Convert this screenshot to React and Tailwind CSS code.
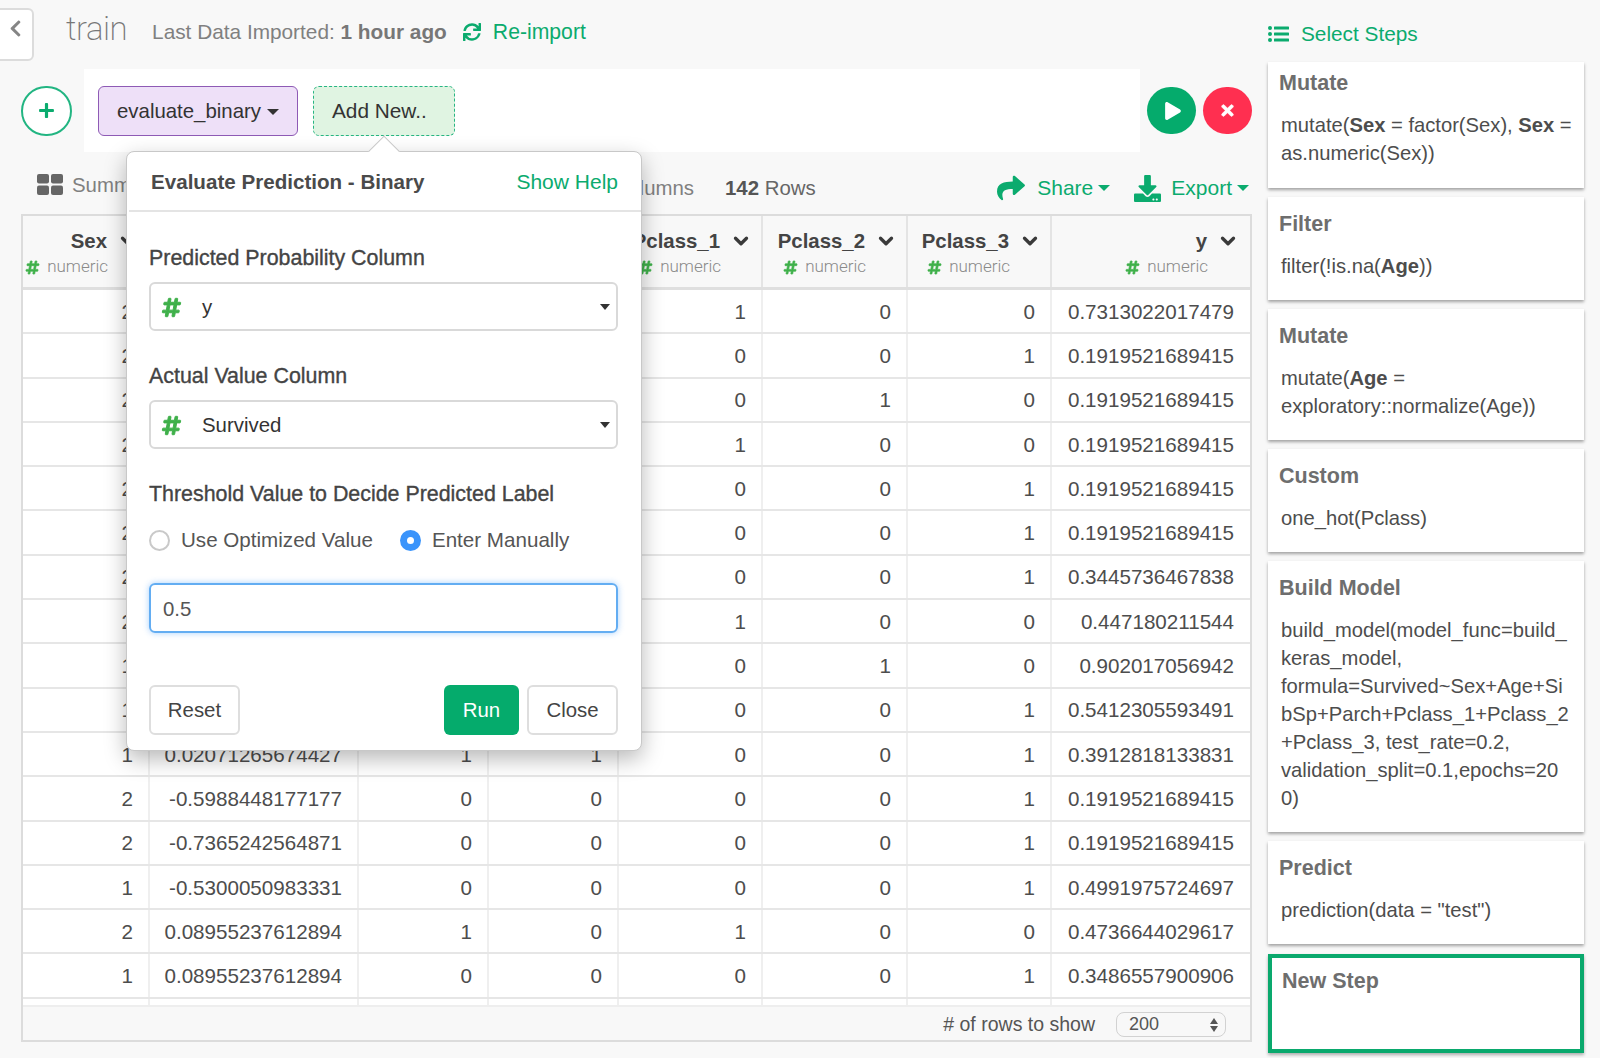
import { ChevronDown } from 'lucide-react'
import {
  FaChevronLeft,
  FaDownload,
  FaHashtag,
  FaPlay,
  FaPlus,
  FaShare,
  FaSync,
  FaTimes,
} from 'react-icons/fa'

// the popover covers Age, SibSp and Parch, so those headers stay without a label
const columns = [
  { name: 'Sex', width: 'w-[127px]' },
  { name: '', width: 'w-[209px]' },
  { name: '', width: 'w-[130px]' },
  { name: '', width: 'w-[130px]' },
  { name: 'Pclass_1', width: 'w-[144px]' },
  { name: 'Pclass_2', width: 'w-[145px]' },
  { name: 'Pclass_3', width: 'w-[144px]' },
  { name: 'y', width: 'flex-1' },
]

// covered cells stay empty too
const rows = [
  ['2', '', '', '', '1', '0', '0', '0.7313022017479'],
  ['2', '', '', '', '0', '0', '1', '0.1919521689415'],
  ['2', '', '', '', '0', '1', '0', '0.1919521689415'],
  ['2', '', '', '', '1', '0', '0', '0.1919521689415'],
  ['2', '', '', '', '0', '0', '1', '0.1919521689415'],
  ['2', '', '', '', '0', '0', '1', '0.1919521689415'],
  ['2', '', '', '', '0', '0', '1', '0.3445736467838'],
  ['2', '', '', '', '1', '0', '0', '0.447180211544'],
  ['1', '', '', '', '0', '1', '0', '0.902017056942'],
  ['1', '', '', '', '0', '0', '1', '0.5412305593491'],
  ['1', '0.02071265674427', '1', '1', '0', '0', '1', '0.3912818133831'],
  ['2', '-0.5988448177177', '0', '0', '0', '0', '1', '0.1919521689415'],
  ['2', '-0.7365242564871', '0', '0', '0', '0', '1', '0.1919521689415'],
  ['1', '-0.5300050983331', '0', '0', '0', '0', '1', '0.4991975724697'],
  ['2', '0.08955237612894', '1', '0', '1', '0', '0', '0.4736644029617'],
  ['1', '0.08955237612894', '0', '0', '0', '0', '1', '0.3486557900906'],
]

function Caret({ className }) {
  return <span className={`inline-block w-0 h-0 border-x-[6px] border-t-[6px] border-x-transparent ${className}`} />
}

function Hash({ size }) {
  return <FaHashtag size={size} stroke="currentColor" strokeWidth={24} className="text-[#3fb04a]" />
}

function GridIcon() {
  return (
    <svg width="26" height="21" viewBox="0 0 26 21" className="text-[#666]" fill="currentColor">
      <rect x="0" y="0" width="12" height="9.5" rx="2" />
      <rect x="14" y="0" width="12" height="9.5" rx="2" />
      <rect x="0" y="11.5" width="12" height="9.5" rx="2" />
      <rect x="14" y="11.5" width="12" height="9.5" rx="2" />
    </svg>
  )
}

function ListIcon() {
  return (
    <svg width="21" height="16" viewBox="0 0 21 16" fill="currentColor">
      <circle cx="2" cy="2" r="2" />
      <circle cx="2" cy="8" r="2" />
      <circle cx="2" cy="14" r="2" />
      <rect x="6" y="0.5" width="15" height="3" rx="0.6" />
      <rect x="6" y="6.5" width="15" height="3" rx="0.6" />
      <rect x="6" y="12.5" width="15" height="3" rx="0.6" />
    </svg>
  )
}

function ColumnHeader({ column }) {
  return (
    <div className={`${column.width} h-full flex flex-col items-end pr-[12px] last:pr-[14px] pt-[11px] border-r-2 border-[#e4e4e4] last:border-r-0 min-w-0`}>
      {column.name && (
        <>
          <div className="flex items-center h-[28px] gap-[13px] font-bold text-[#444]">
            <span>{column.name}</span>
            <ChevronDown size={22} strokeWidth={3.6} className="text-[#3a3a3a] -mx-[3px]" />
          </div>
          <div className="flex items-center h-[24px] pr-[28px] text-[17px] text-[#8a8a8a] gap-[7px] font-['Roboto',sans-serif] font-light">
            <Hash size={15} />
            <span>numeric</span>
          </div>
        </>
      )}
    </div>
  )
}

function DataRow({ row }) {
  return (
    <div className="flex h-[44.3px] border-b-2 border-[#e6e6e6] shrink-0">
      {row.map((value, i) => (
        <div
          key={i}
          className={`${columns[i].width} flex items-center justify-end pt-[2px] pr-[15px] last:pr-[16px] border-r-2 border-[#efefef] last:border-r-0 text-[#4d4d4d] text-[20.6px]`}
        >
          {value}
        </div>
      ))}
    </div>
  )
}

function StepCard({ title, first, children }) {
  return (
    <div className={`bg-white shadow-[0_2px_3px_rgba(0,0,0,0.35)] ${first ? 'pt-[7px] pb-[20.5px]' : 'pt-[13px] pb-[20px]'}`}>
      <div className="h-[28px] leading-[28px] pl-[11px] font-bold text-[21.5px] text-[#6e6e6e]">{title}</div>
      {children && <div className="mt-[14px] pl-[13px] leading-[28px] text-[20.2px] text-[#4d4d4d] whitespace-nowrap">{children}</div>}
    </div>
  )
}

function SelectBox({ value }) {
  return (
    <div className="relative flex items-center h-[49px] pt-[1px] border-2 border-[#d9d9d9] rounded-[6px] bg-white pl-[10px] text-[#333]">
      <Hash size={21} />
      <span className="ml-[20px]">{value}</span>
      <Caret className="absolute right-[6px] top-[20px] border-t-[#333] !border-x-[5px]" />
    </div>
  )
}

function Popover() {
  const labelStyle = "h-[28px] leading-[28px] text-[21.4px] text-[#444] [-webkit-text-stroke:0.35px_#444] whitespace-nowrap"
  return (
    <div className="absolute left-[126px] top-[151px] w-[516px] h-[600px] bg-white border border-[#c8c8c8] rounded-[8px] shadow-[0_8px_22px_rgba(0,0,0,0.28)]">
      <div className="absolute left-[246px] -top-[12px] w-[22px] h-[22px] rotate-45 bg-white border-l border-t border-[#c8c8c8]" />
      <div className="relative flex items-center justify-between h-[60px] pt-[2px] ml-[2px] pl-[22px] pr-[23px] border-b-2 border-[#e4e4e4]">
        <span className="font-bold text-[20.6px] text-[#4a4a4a]">Evaluate Prediction - Binary</span>
        <span className="text-[21px] text-[#0bab6e]">Show Help</span>
      </div>
      <div className="pl-[22px] pr-[23px]">
        <div className={`mt-[32px] mb-[10px] ${labelStyle}`}>Predicted Probability Column</div>
        <SelectBox value="y" />
        <div className={`mt-[31px] mb-[10px] ${labelStyle}`}>Actual Value Column</div>
        <SelectBox value="Survived" />
        <div className={`mt-[31px] ${labelStyle}`}>Threshold Value to Decide Predicted Label</div>
        <div className="mt-[18px] flex items-center h-[28px] text-[20.6px] text-[#555]">
          <span className="w-[21px] h-[21px] rounded-full border-2 border-[#c9c9c9] bg-white" />
          <span className="ml-[11px]">Use Optimized Value</span>
          <span className="ml-[27px] w-[21px] h-[21px] rounded-full bg-[#3a94fb] flex items-center justify-center">
            <span className="w-[7px] h-[7px] rounded-full bg-white" />
          </span>
          <span className="ml-[11px]">Enter Manually</span>
        </div>
        <div className="mt-[29px] flex items-center h-[50px] pt-[2px] border-2 border-[#63adf2] rounded-[6px] pl-[12px] text-[#555] shadow-[0_0_6px_rgba(60,150,250,0.45)]">
          0.5
        </div>
        <div className="mt-[52px] flex h-[50px] gap-[8px]">
          <button className="w-[91px] border-2 border-[#dedede] rounded-[6px] text-[#444] bg-white">Reset</button>
          <button className="ml-auto w-[75px] rounded-[6px] bg-[#05ab6c] text-white">Run</button>
          <button className="w-[91px] border-2 border-[#dedede] rounded-[6px] text-[#444] bg-white">Close</button>
        </div>
      </div>
    </div>
  )
}

export default function App() {
  return (
    <div className="relative flex w-[1600px] h-[1058px] overflow-hidden bg-[#f8f8f8] font-['Liberation_Sans',Arial,sans-serif] text-[20.4px]">
      <div className="w-[1268px] shrink-0 flex flex-col">
        {/* top line */}
        <div className="flex items-start h-[69px] shrink-0 text-[20.8px]">
          <div className="mt-[8px] -ml-[6px] w-[40px] h-[53px] bg-white border-2 border-[#dcdcdc] rounded-[6px] flex items-center justify-center pl-[2px] pb-[12px]">
            <FaChevronLeft size={19} className="text-[#858585]" />
          </div>
          <span className="ml-[32px] mt-[7px] text-[33px] leading-[44px] tracking-[-0.5px] font-['Roboto',sans-serif] font-extralight text-[#777]">train</span>
          <span className="ml-[25px] mt-[18px] leading-[28px] text-[#808080]">
            Last Data Imported: <b className="text-[#777]">1 hour ago</b>
          </span>
          <FaSync size={18} className="ml-[16px] mt-[23px] text-[#0bab6e]" />
          <span className="ml-[12px] mt-[18px] leading-[28px] text-[21.2px] text-[#0bab6e]">Re-import</span>
        </div>

        {/* step bar */}
        <div className="flex items-center h-[83px] shrink-0">
          <div className="ml-[21px] w-[51px] h-[50px] rounded-full border-2 border-[#22b582] bg-white flex items-center justify-center">
            <FaPlus size={17} className="text-[#0bab6e]" />
          </div>
          <div className="ml-[12px] w-[1056px] h-full bg-white flex items-center pl-[14px] gap-[15px]">
            <div className="w-[200px] h-[50px] rounded-[6px] border-[1.5px] border-[#8e5ab5] bg-[#eee0f8] flex items-center pt-[2px] pl-[18px] text-[#333]">
              evaluate_binary
              <Caret className="ml-[6px] border-t-[#333]" />
            </div>
            <div className="w-[142px] h-[50px] rounded-[6px] border border-dashed border-[#27b582] bg-[#e0f4e2] flex items-center pl-[18px] text-[20.8px] text-[#333]">
              Add New..
            </div>
          </div>
          <div className="ml-[7px] w-[49px] h-[47px] rounded-full bg-[#05ab6c] flex items-center justify-center pl-[3px]">
            <FaPlay size={18} className="text-white" />
          </div>
          <div className="ml-[7px] w-[49px] h-[47px] rounded-full bg-[#ff2f50] flex items-center justify-center">
            <FaTimes size={17} stroke="currentColor" strokeWidth={20} className="text-white" />
          </div>
        </div>

        {/* view tabs and actions */}
        <div className="flex items-center h-[62px] pt-[10px] pl-[37px] pr-[19px] shrink-0">
          <div className="w-[657px] flex items-center justify-between text-[#808080]">
            <span className="flex items-center gap-[9px] -mt-[6px]">
              <GridIcon />
              Summary
            </span>
            <span>Columns</span>
          </div>
          <span className="ml-[31px] text-[#666]">
            <b className="text-[#555]">142</b> Rows
          </span>
          <div className="ml-auto flex items-center text-[#0bab6e] text-[21px]">
            <FaShare size={28} />
            <span className="ml-[12px]">Share</span>
            <Caret className="ml-[5px] border-t-[#0bab6e]" />
            <FaDownload size={27} className="ml-[24px]" />
            <span className="ml-[10px]">Export</span>
            <Caret className="ml-[5px] border-t-[#0bab6e]" />
          </div>
        </div>

        {/* table */}
        <div className="ml-[21px] w-[1231px] h-[828px] border-2 border-[#dcdcdc] flex flex-col shrink-0">
          <div className="flex h-[74px] border-b-[3px] border-[#dfdfdf] shrink-0">
            {columns.map((column, i) => (
              <ColumnHeader key={i} column={column} />
            ))}
          </div>
          <div className="flex-1 flex flex-col overflow-hidden bg-white">
            {rows.map((row, i) => (
              <DataRow key={i} row={row} />
            ))}
            <div className="flex flex-1">
              {columns.map((column, i) => (
                <div key={i} className={`${column.width} border-r-2 border-[#efefef] last:border-r-0`} />
              ))}
            </div>
          </div>
          <div className="flex items-center justify-end h-[35px] pt-[2px] pr-[24px] border-t-2 border-[#eeeeee] shrink-0 text-[19.5px] text-[#555]">
            # of rows to show
            <div className="ml-[21px] w-[110px] h-[25px] border border-[#d2d2d2] rounded-[8px] flex items-center justify-between pl-[12px] pr-[7px] text-[18px]">
              200
              <span className="flex flex-col gap-[2px]">
                <span className="w-0 h-0 border-x-[4px] border-b-[6px] border-x-transparent border-b-[#555]" />
                <span className="w-0 h-0 border-x-[4px] border-t-[6px] border-x-transparent border-t-[#555]" />
              </span>
            </div>
          </div>
        </div>
      </div>

      {/* steps */}
      <div className="flex-1 flex flex-col pr-[16px]">
        <div className="flex items-center h-[62px] pt-[6px] shrink-0 text-[20.8px] text-[#0bab6e] gap-[12px]">
          <ListIcon />
          <span>Select Steps</span>
        </div>
        <div className="flex flex-col gap-[9.2px]">
          <StepCard title="Mutate" first>
            mutate(<b>Sex</b> = factor(Sex), <b>Sex</b> =
            <br />
            as.numeric(Sex))
          </StepCard>
          <StepCard title="Filter">
            filter(!is.na(<b>Age</b>))
          </StepCard>
          <StepCard title="Mutate">
            mutate(<b>Age</b> =
            <br />
            exploratory::normalize(Age))
          </StepCard>
          <StepCard title="Custom">one_hot(Pclass)</StepCard>
          <StepCard title="Build Model">
            build_model(model_func=build_
            <br />
            keras_model,
            <br />
            formula=Survived~Sex+Age+Si
            <br />
            bSp+Parch+Pclass_1+Pclass_2
            <br />
            +Pclass_3, test_rate=0.2,
            <br />
            validation_split=0.1,epochs=20
            <br />
            0)
          </StepCard>
          <StepCard title="Predict">prediction(data = "test")</StepCard>
          <div className="h-[99px] border-[4px] border-[#0aa96d] bg-white pl-[10px] pt-[7px] shadow-[0_2px_3px_rgba(0,0,0,0.3)] font-bold text-[21.5px] text-[#6e6e6e]">
            New Step
          </div>
        </div>
      </div>

      <Popover />
    </div>
  )
}
